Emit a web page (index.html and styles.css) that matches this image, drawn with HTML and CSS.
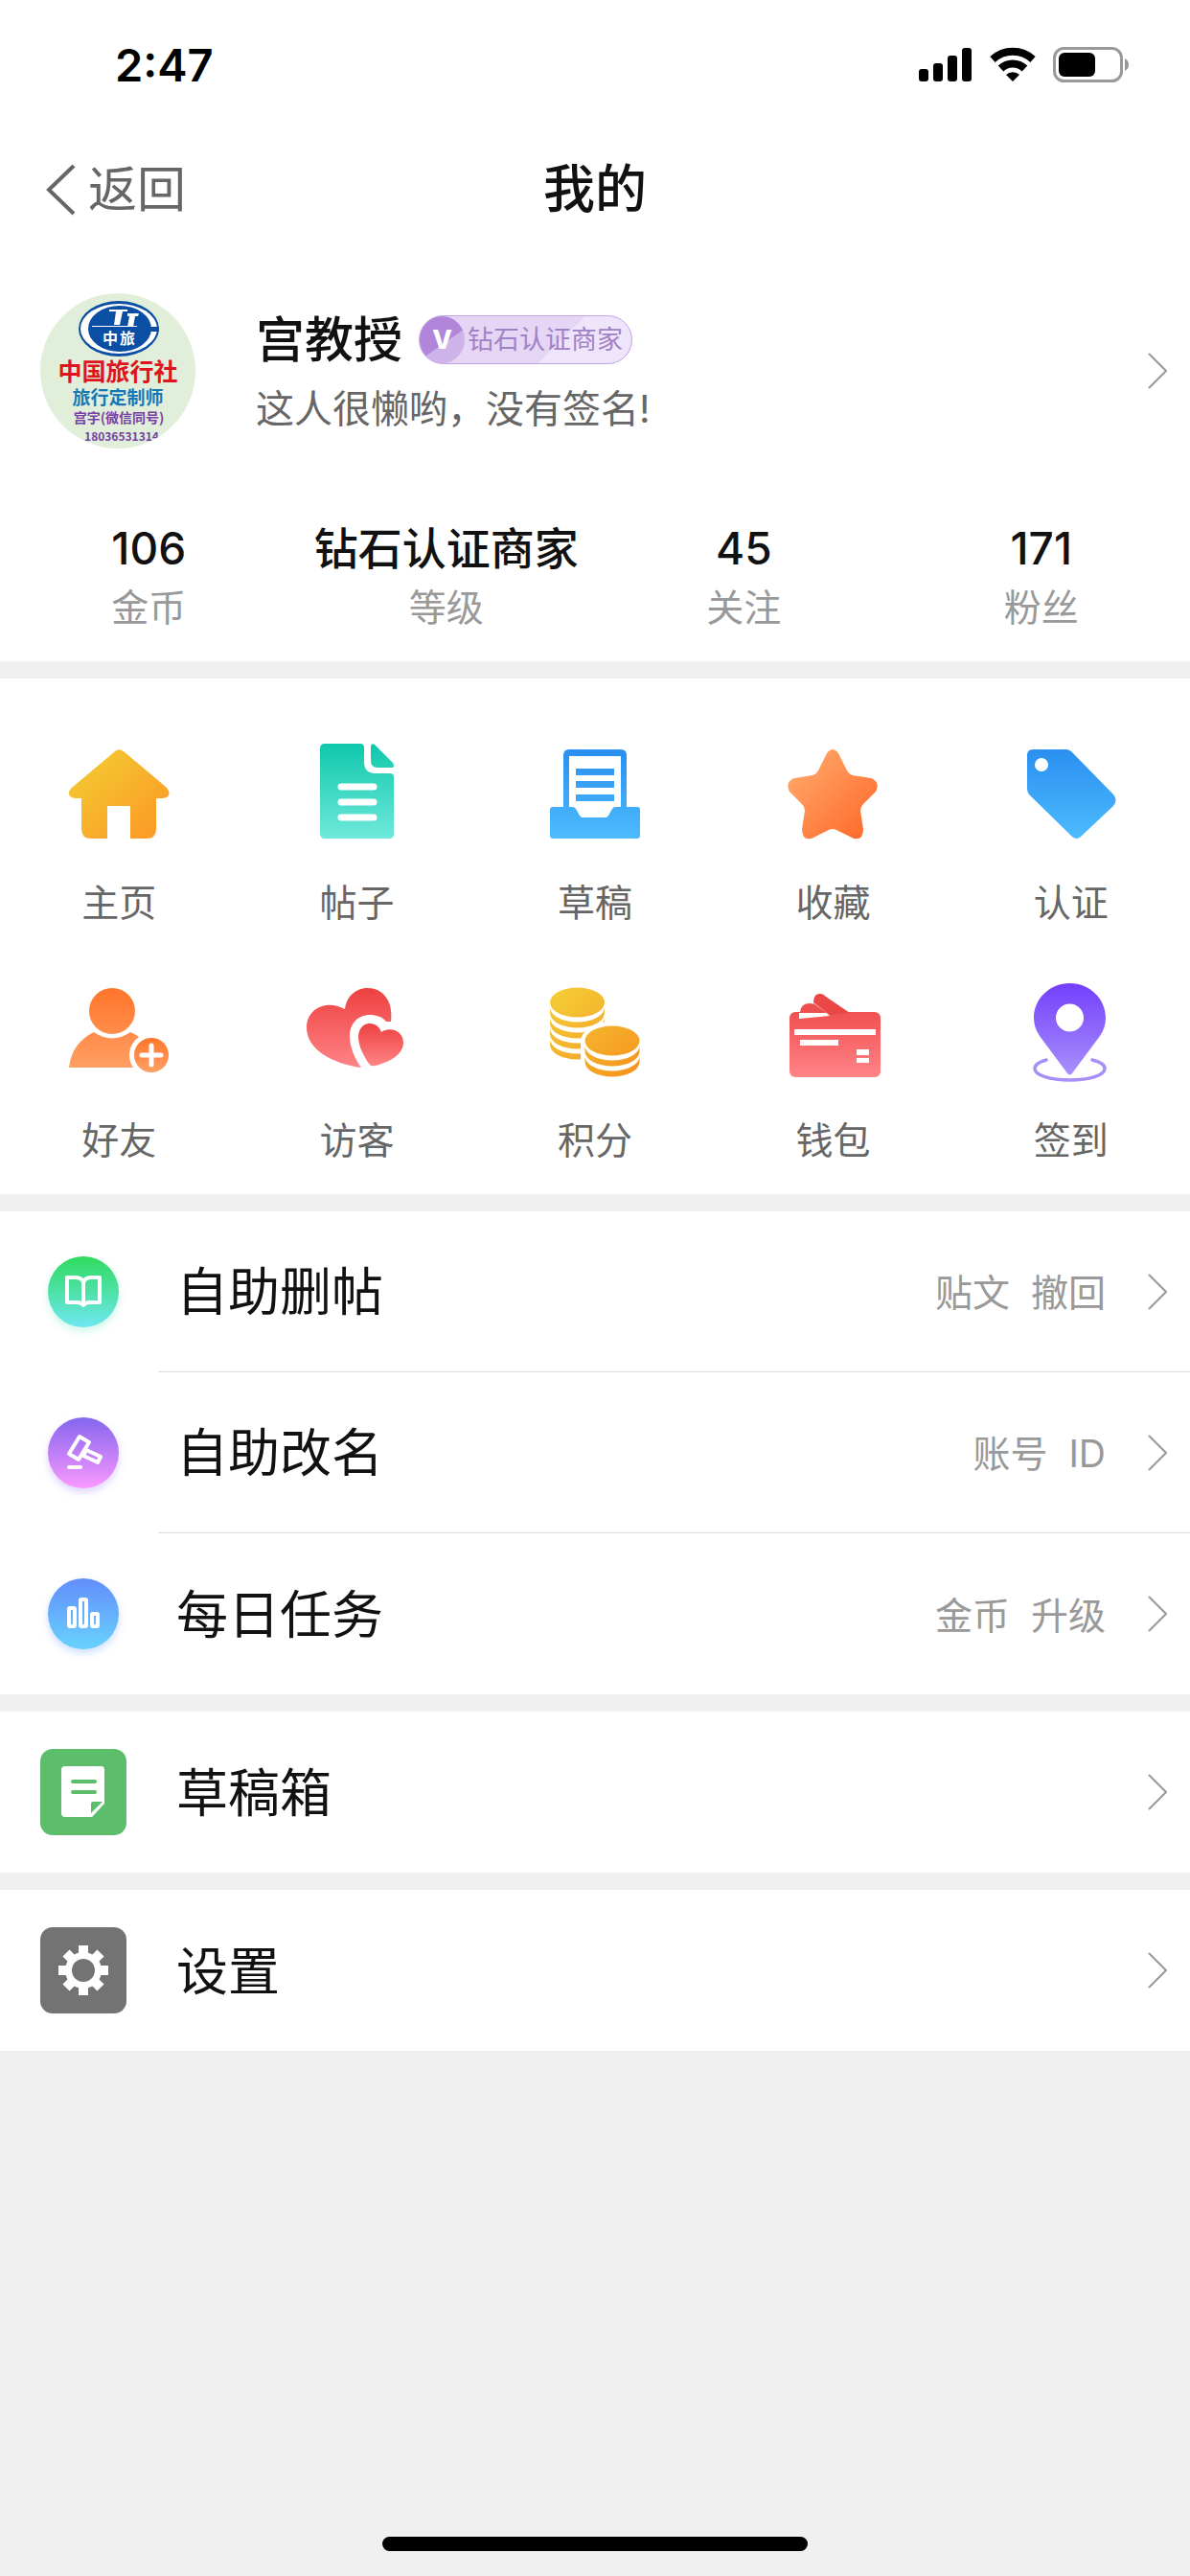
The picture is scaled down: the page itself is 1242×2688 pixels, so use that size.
FILE: index.html
```html
<!DOCTYPE html>
<html lang="zh-CN">

<head>
  <meta charset="utf-8">
  <meta name="viewport" content="width=device-width, initial-scale=1">
  <title>我的</title>
  <link rel="stylesheet" href="styles.css">
</head>

<body>
  <header class="top">
    <div class="status-bar">
      <span class="time">2:47</span>
      <svg class="status-icons" width="222" height="40" viewBox="0 0 222 40">
        <rect x="1" y="25" width="10" height="13" rx="3" />
        <rect x="16" y="19" width="10" height="19" rx="3" />
        <rect x="31" y="11" width="10" height="27" rx="3" />
        <rect x="46" y="3" width="10" height="35" rx="3" />
        <g fill="none" stroke="#000" stroke-width="8">
          <path d="M78 15 A31 31 0 0 1 120 15" />
          <path d="M86.500 24.500 A18 18 0 0 1 111.500 24.500" />
        </g>
        <path d="M99 38 L92 31 A10.500 10.500 0 0 1 106 31Z" />
        <rect x="142.500" y="3.500" width="70" height="34" rx="10" fill="none" stroke="#999" stroke-width="3" />
        <rect x="147" y="8" width="38" height="25" rx="6" />
        <path d="M216 14 Q220 16 220 20.500 Q220 25 216 27Z" fill="#999" />
      </svg>
    </div>
    <nav class="nav">
      <button class="back" type="button">
        <svg width="32" height="54" viewBox="0 0 32 54"><path d="M29 2 L3 27 L29 52" fill="none" stroke="#666" stroke-width="4" /></svg>
        返回
      </button>
      <h1>我的</h1>
    </nav>
  </header>

  <section class="card">
    <a class="profile" href="#profile">
      <svg class="avatar" viewBox="0 0 162 162">
        <clipPath id="round"><circle cx="81" cy="81" r="81" /></clipPath>
        <g clip-path="url(#round)">
          <rect width="162" height="162" fill="#e1efda" />
          <ellipse cx="82" cy="37" rx="42" ry="29" fill="#0a4fa3" />
          <ellipse cx="82" cy="37" rx="40" ry="26" fill="#fff" />
          <ellipse cx="83" cy="37" rx="33" ry="24" fill="#0a4fa3" />
          <path d="M112 35 H124 V40 H112Z" fill="#0a4fa3" />
          <path d="M54 34 H101 V35 H54Z M72 17 H91 V19 H86 L83 33 H77 L79 19 H72Z M91 21 H103 L102 24 H99 L97 35 H91 L93 24 H91Z" fill="#fff" />
          <text x="65" y="53" class="logo-name">中</text>
          <text x="83" y="53" class="logo-name">旅</text>
          <text x="81" y="91" class="agency">中国旅行社</text>
          <text x="81" y="116" class="role">旅行定制师</text>
          <text x="82" y="135" class="contact">宫宇(微信同号)</text>
          <text x="85" y="154" class="phone">18036531314</text>
        </g>
      </svg>
      <div class="profile-body">
        <div class="name-row">
          <span class="name">宫教授</span>
          <span class="badge">
            <span class="badge-v">V</span>
            钻石认证商家
          </span>
        </div>
        <p class="signature">这人很懒哟，没有签名!</p>
      </div>
      <svg class="chevron" viewBox="0 0 20 38"><path d="M1 1 L19 19 L1 37" /></svg>
    </a>
    <dl class="stats">
      <div><dd>106</dd><dt>金币</dt></div>
      <div><dd>钻石认证商家</dd><dt>等级</dt></div>
      <div><dd>45</dd><dt>关注</dt></div>
      <div><dd>171</dd><dt>粉丝</dt></div>
    </dl>
  </section>

  <section class="card menu">
    <a href="#home">
      <svg viewBox="0 0 120 120">
        <linearGradient id="gold" x1="0" y1="0" x2="1" y2="1"><stop offset="0.200" stop-color="#f5c431" /><stop offset="1" stop-color="#fc9524" /></linearGradient>
        <path fill="url(#gold)" d="M56 16 Q60 12.500 65 16 L109 53 Q114 58 112 62 Q110 65 105 65 H99 V97 Q99 107 89 107 H72 V74 Q72 73 71 73 H49 Q48 73 48 74 V107 H31 Q21 107 21 97 V65 H15 Q10 65 8 61 Q7 57 12 53Z" />
      </svg>
      主页
    </a>
    <a href="#posts">
      <svg viewBox="0 0 120 120">
        <linearGradient id="teal" gradientUnits="userSpaceOnUse" x1="0" y1="8" x2="0" y2="107"><stop stop-color="#0fc8ab" /><stop offset="1" stop-color="#6fe9db" /></linearGradient>
        <path fill="url(#teal)" d="M26 8 H63 Q67 8 67 12 V27 Q67 39 79 39 H94 Q98 39 98 43 V103 Q98 107 93 107 H26 Q21 107 21 102 V13 Q21 8 26 8Z M74 11 Q74 7 78 9 L97 28 Q99 31 97 33 H81 Q74 33 74 26Z" />
        <path d="M43 53 H77 M43 69 H77 M43 85 H77" stroke="#fff" stroke-width="7" stroke-linecap="round" />
      </svg>
      帖子
    </a>
    <a href="#drafts">
      <svg viewBox="0 0 120 120">
        <linearGradient id="blue" gradientUnits="userSpaceOnUse" x1="0" y1="14" x2="0" y2="107"><stop stop-color="#2a8ff0" /><stop offset="1" stop-color="#4dbbfe" /></linearGradient>
        <path fill="url(#blue)" fill-rule="evenodd" d="M33 14 H87 Q93 14 93 20 V74 H104 Q107 74 107 77 V104 Q107 107 104 107 H16 Q13 107 13 104 V77 Q13 74 16 74 H27 V20 Q27 14 33 14Z M33 21 V74 H36 Q39 74 40 76 L44 83 Q45 85 47 85 H71 Q73 85 74 83 L78 76 Q79 74 82 74 H87 V21Z M40 34 H80 V41 H40Z M40 47 H80 V54 H40Z M40 61 H80 V68 H40Z" />
      </svg>
      草稿
    </a>
    <a href="#favorites">
      <svg viewBox="0 0 120 120">
        <linearGradient id="orange" x1="0" y1="0" x2="1" y2="1"><stop offset="0.200" stop-color="#ffa062" /><stop offset="0.900" stop-color="#ff6d2d" /></linearGradient>
        <path fill="url(#orange)" d="M54 18 Q60 10 66 18 L75 36 Q77 40 81 41 L100 44 Q110 48 105 58 L92 71 Q89 74 89 78 L92 97 Q92 109 82 107 L64 98 Q60 96 56 98 L38 107 Q28 109 28 97 L31 78 Q31 74 28 71 L15 58 Q10 48 20 44 L39 41 Q43 40 45 36Z" />
      </svg>
      收藏
    </a>
    <a href="#verify">
      <svg viewBox="0 0 120 120">
        <path fill="url(#blue)" fill-rule="evenodd" d="M20 14 H55 Q58 14 61 17 L104 61 Q109 67 104 73 L70 105 Q66 109 61 105 L17 62 Q14 59 14 54 V20 Q14 14 20 14Z M29 23 A7 7 0 1 0 29 37 A7 7 0 1 0 29 23Z" />
      </svg>
      认证
    </a>
    <a href="#friends">
      <svg viewBox="0 0 120 120">
        <linearGradient id="person" gradientUnits="userSpaceOnUse" x1="0" y1="15" x2="0" y2="102"><stop stop-color="#ff752b" /><stop offset="1" stop-color="#ffa065" /></linearGradient>
        <linearGradient id="plus" x1="0" y1="0" x2="0" y2="1"><stop stop-color="#ff752b" /><stop offset="1" stop-color="#ffa065" /></linearGradient>
        <circle cx="53" cy="39" r="24" fill="url(#person)" />
        <path fill="url(#person)" d="M8 98 Q11 72 34 61 Q53 74 72 61 Q77 63 81 66 A23 23 0 0 0 75 98Z" />
        <circle cx="94" cy="85" r="18" fill="url(#plus)" />
        <path d="M94 75 V95 M84 85 H104" stroke="#fff" stroke-width="5" stroke-linecap="round" />
      </svg>
      好友
    </a>
    <a href="#visitors">
      <svg viewBox="0 0 120 120">
        <linearGradient id="heart" x1="0" y1="0" x2="0" y2="1"><stop stop-color="#ee4040" /><stop offset="1" stop-color="#ff8487" /></linearGradient>
        <path fill="url(#heart)" d="M47 37 C49 22 60 15 71 15 C85 15 98 27 95 50 H90 C86 45 80 43 73 43 C60 43 52 53 52 65 C52 77 57 88 64 98 C35 94 7 80 7 56 C7 37 27 26 47 37Z" />
        <path fill="url(#heart)" d="M85 61 C83 55 78 52 73 52 C66 52 61 58 61 66 C61 77 69 90 73 95 Q75 97 78 96 C92 93 108 85 108 72 C108 59 93 55 85 61Z" />
      </svg>
      访客
    </a>
    <a href="#points">
      <svg viewBox="0 0 120 120">
        <linearGradient id="coins" gradientUnits="userSpaceOnUse" x1="20" y1="15" x2="100" y2="108"><stop stop-color="#f4cd37" /><stop offset="1" stop-color="#f6931f" /></linearGradient>
        <g fill="url(#coins)">
          <ellipse cx="41.500" cy="30" rx="28.500" ry="15.500" />
          <path d="M13 35 A28.500 15.500 0 0 0 70 35 V41 A28.500 15.500 0 0 1 13 41Z M13 46 A28.500 15.500 0 0 0 70 46 V52 A28.500 15.500 0 0 1 13 52Z M13 57 A28.500 15.500 0 0 0 70 57 V63 A28.500 15.500 0 0 1 13 63Z M13 68 A28.500 15.500 0 0 0 70 68 V74 A28.500 15.500 0 0 1 13 74Z" />
        </g>
        <path d="M45 71 A33 21 0 0 1 111 71 V110 H45Z" fill="#fff" />
        <g fill="url(#coins)">
          <ellipse cx="78" cy="70" rx="28.500" ry="15.500" />
          <path d="M49.500 75 A28.500 15.500 0 0 0 106.500 75 V81 A28.500 15.500 0 0 1 49.500 81Z M49.500 86 A28.500 15.500 0 0 0 106.500 86 V92 A28.500 15.500 0 0 1 49.500 92Z" />
        </g>
      </svg>
      积分
    </a>
    <a href="#wallet">
      <svg viewBox="0 0 120 120">
        <linearGradient id="wallet-red" gradientUnits="userSpaceOnUse" x1="0" y1="25" x2="0" y2="108"><stop stop-color="#ee4545" /><stop offset="1" stop-color="#ff8488" /></linearGradient>
        <rect x="15" y="40" width="95" height="68" rx="6" fill="url(#wallet-red)" />
        <path d="M25 41 H54 L57 44 L25 47Z M20 58 H105 V64 H20Z M26 69 H66 V75 H26Z M85 79 H98 V85 H85Z M85 88 H98 V93 H85Z" fill="#fff" />
        <path d="M26 40 Q27 31 36 31 Q41 31 45 35 L54 40Z" fill="#ee4f4f" />
        <path d="M40 30 Q40 20 48 21 Q50 21 53 24 L78 41 L57 43Z" fill="#ec4747" />
        <path d="M40 31 L57 43" stroke="#f66a6a" />
      </svg>
      钱包
    </a>
    <a href="#checkin">
      <svg viewBox="0 0 120 120">
        <linearGradient id="violet" x1="0" y1="0" x2="0" y2="1"><stop stop-color="#723ffb" /><stop offset="1" stop-color="#a98ffc" /></linearGradient>
        <path fill="url(#violet)" fill-rule="evenodd" d="M58.500 10 C79 10 96 26 96 46 C96 53 94 59 90 65 L61 104 Q58.500 107 56 104 L27 65 C23 59 21 53 21 46 C21 26 38 10 58.500 10Z M58.500 31.500 A14.500 14.500 0 1 0 58.500 60.500 A14.500 14.500 0 1 0 58.500 31.500Z" />
        <path d="M34 90 C27 92 22 95 22 99 C22 106 38 111 58.500 111 C79 111 95 106 95 99 C95 95 90 92 82 90" fill="none" stroke="#a78ffa" stroke-width="3.500" stroke-linecap="round" />
      </svg>
      签到
    </a>
  </section>

  <section class="card list">
    <a class="row" href="#delete">
      <svg class="row-icon glow-green" viewBox="0 0 90 90">
        <linearGradient id="green" x1="0" y1="0" x2="0" y2="1"><stop stop-color="#2edb5d" /><stop offset="1" stop-color="#6fe7f2" /></linearGradient>
        <circle cx="45" cy="45" r="37" fill="url(#green)" />
        <path d="M45 35 Q43 30 37 30 H28 V56 H38 Q43 56 45 59 Q47 56 52 56 H62 V30 H53 Q47 30 45 35 V57" fill="none" stroke="#fff" stroke-width="4" stroke-linejoin="round" />
      </svg>
      <div class="row-body">
        <span class="row-title">自助删帖</span>
        <span class="row-note">贴文  撤回</span>
        <svg class="chevron" viewBox="0 0 20 38"><path d="M1 1 L19 19 L1 37" /></svg>
      </div>
    </a>
    <a class="row" href="#rename">
      <svg class="row-icon glow-violet" viewBox="0 0 90 90">
        <linearGradient id="purple" x1="0" y1="0" x2="0" y2="1"><stop stop-color="#8466ee" /><stop offset="1" stop-color="#fa98ff" /></linearGradient>
        <circle cx="45" cy="45" r="37" fill="url(#purple)" />
        <path d="M41 28 L51 34 L40 52 L30 46Z M48 42 L63 49 L60 55 L45 48Z" fill="none" stroke="#fff" stroke-width="4" stroke-linejoin="round" />
        <path d="M30 60 H42" stroke="#fff" stroke-width="4" stroke-linecap="round" />
      </svg>
      <div class="row-body">
        <span class="row-title">自助改名</span>
        <span class="row-note">账号  ID</span>
        <svg class="chevron" viewBox="0 0 20 38"><path d="M1 1 L19 19 L1 37" /></svg>
      </div>
    </a>
    <a class="row" href="#tasks">
      <svg class="row-icon glow-blue" viewBox="0 0 90 90">
        <linearGradient id="sky" x1="0" y1="0" x2="0" y2="1"><stop stop-color="#628dfb" /><stop offset="1" stop-color="#68d3fd" /></linearGradient>
        <circle cx="45" cy="45" r="37" fill="url(#sky)" />
        <g fill="none" stroke="#fff" stroke-width="4">
          <rect x="30" y="39" width="6" height="19" rx="1" />
          <rect x="42" y="30" width="6" height="28" rx="1" />
          <rect x="54" y="45" width="6" height="13" rx="1" />
        </g>
      </svg>
      <div class="row-body">
        <span class="row-title">每日任务</span>
        <span class="row-note">金币  升级</span>
        <svg class="chevron" viewBox="0 0 20 38"><path d="M1 1 L19 19 L1 37" /></svg>
      </div>
    </a>
  </section>

  <section class="card list">
    <a class="row" href="#draftbox">
      <svg class="row-icon" viewBox="0 0 90 90">
        <rect width="90" height="90" rx="13" fill="#5cbe6b" />
        <path fill="#fff" d="M26 18 H64 Q67 18 67 22 V57 L54 71 H26 Q22 71 22 67 V22 Q22 18 26 18Z" />
        <path d="M34 34 H57 M34 45 H57" stroke="#5cbe6b" stroke-width="4" stroke-linecap="round" />
        <path d="M65 55 H55 Q53 55 53 57 V67Z" fill="#5cbe6b" />
      </svg>
      <div class="row-body">
        <span class="row-title">草稿箱</span>
        <svg class="chevron" viewBox="0 0 20 38"><path d="M1 1 L19 19 L1 37" /></svg>
      </div>
    </a>
  </section>

  <section class="card list">
    <a class="row" href="#settings">
      <svg class="row-icon" viewBox="0 0 90 90">
        <rect width="90" height="90" rx="13" fill="#737373" />
        <g stroke="#fff" stroke-width="10">
          <path d="M45 19 V71 M19 45 H71 M27 27 L63 63 M63 27 L27 63" />
        </g>
        <circle cx="45" cy="45" r="19" fill="#fff" />
        <circle cx="45" cy="45" r="12" fill="#737373" />
      </svg>
      <div class="row-body">
        <span class="row-title">设置</span>
        <svg class="chevron" viewBox="0 0 20 38"><path d="M1 1 L19 19 L1 37" /></svg>
      </div>
    </a>
  </section>

  <footer class="home-indicator"></footer>
</body>

</html>
```

FILE: styles.css
```css
* {
  margin: 0;
  padding: 0;
  box-sizing: border-box;
}

body {
  display: flex;
  flex-direction: column;
  min-height: 100vh;
  background: #f0f0f0;
  color: #111;
  font-family: Inter, "Noto Sans CJK SC", sans-serif;
  font-size: 39px;
  line-height: 60px;
}

a {
  color: inherit;
  text-decoration: none;
}

svg {
  flex: none;
}

.top,
.card {
  background: #fff;
}

.card + .card {
  margin-top: 18px;
}

/* status bar */
.status-bar {
  display: flex;
  align-items: center;
  justify-content: space-between;
  height: 134px;
  padding: 0 62px 0 120px;
}

.time {
  padding-top: 2px;
  font-size: 47px;
  font-weight: 600;
  color: #000;
}

/* title bar */
.nav {
  display: grid;
  grid-template-columns: 1fr auto 1fr;
  align-items: center;
  height: 128px;
  padding: 0 48px;
}

.back {
  display: flex;
  align-items: center;
  gap: 12px;
  border: none;
  background: none;
  color: #666;
  font: inherit;
  font-size: 51px;
  cursor: pointer;
}

.nav h1 {
  font-size: 54px;
  font-weight: 500;
}

/* profile */
.profile {
  display: flex;
  align-items: center;
  height: 250px;
  padding: 0 24px 0 42px;
}

.avatar {
  width: 162px;
  height: 162px;
}

.avatar text {
  font-family: "Noto Sans CJK SC", sans-serif;
  font-weight: 700;
  text-anchor: middle;
}

.avatar .logo-name {
  font-size: 16px;
  fill: #fff;
  text-anchor: start;
}

.avatar .agency {
  font-size: 25px;
  fill: #e0141c;
}

.avatar .role {
  font-size: 19px;
  fill: #1778b8;
}

.avatar .contact {
  font-size: 14px;
  fill: #773fa5;
}

.avatar .phone {
  font-size: 12px;
  fill: #773fa5;
}

.profile-body {
  flex: 1;
  padding: 7px 0 0 63px;
}

.name-row {
  display: flex;
  align-items: center;
  gap: 17px;
  margin-bottom: 12px;
}

.name {
  font-size: 51px;
  font-weight: 500;
}

.badge {
  display: flex;
  align-items: center;
  gap: 3px;
  height: 51px;
  padding-right: 9px;
  border: 1px solid #c2a2ea;
  border-radius: 26px;
  background: linear-gradient(135deg, #e5d6f5 64%, #eee5fa 64%);
  color: #a182c6;
  font-size: 27px;
}

.badge-v {
  width: 47px;
  height: 49px;
  border-radius: 50%;
  background: linear-gradient(145deg, #b186da 56%, #cdb3e8 56%);
  color: #fff;
  font-weight: 800;
  line-height: 49px;
  text-align: center;
}

.signature {
  color: #666;
  font-size: 40px;
}

.chevron {
  width: 20px;
  height: 38px;
  fill: none;
  stroke: #999;
  stroke-width: 2;
}

/* counters */
.stats {
  display: grid;
  grid-template-columns: repeat(4, 1fr);
  padding: 30px 0 26px;
  text-align: center;
}

.stats div {
  display: flex;
  flex-direction: column;
  gap: 2px;
}

.stats dd {
  font-size: 46px;
  font-weight: 500;
}

.stats dt {
  color: #999;
}

/* icon menu */
.menu {
  display: grid;
  grid-template-columns: repeat(5, 1fr);
  row-gap: 44px;
  padding: 60px 0 26px;
}

.menu a {
  display: flex;
  flex-direction: column;
  align-items: center;
  gap: 24px;
  color: #666;
}

.menu svg {
  width: 120px;
  height: 120px;
}

/* list rows */
.row {
  display: flex;
  align-items: center;
  height: 168px;
  padding-left: 42px;
}

.row-icon {
  width: 90px;
  height: 90px;
}

.glow-green {
  filter: drop-shadow(0 4px 4px rgba(90, 230, 180, 0.3));
}

.glow-violet {
  filter: drop-shadow(0 4px 4px rgba(150, 110, 255, 0.3));
}

.glow-blue {
  filter: drop-shadow(0 4px 4px rgba(90, 150, 255, 0.3));
}

.row-body {
  flex: 1;
  display: flex;
  align-items: center;
  align-self: stretch;
  margin-left: 33px;
  padding: 0 24px 0 19px;
}

.row:not(:last-child) .row-body {
  border-bottom: 1px solid #dedede;
}

.row-title,
.row-note {
  padding-top: 3px;
}

.row-title {
  flex: 1;
  font-size: 54px;
}

.row-note {
  margin-right: 44px;
  color: #999;
  white-space: pre;
}

.home-indicator {
  width: 444px;
  height: 15px;
  margin: auto auto 26px;
  border-radius: 8px;
  background: #000;
}
```
